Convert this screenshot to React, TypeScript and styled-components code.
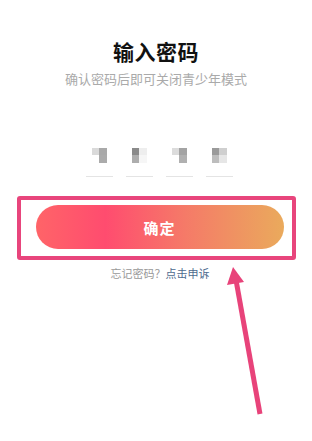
import React from "react";
import styled, { createGlobalStyle } from "styled-components";

const Global = createGlobalStyle`
  html, body { margin: 0; padding: 0; background: #ffffff; }
  body { font-family: "Noto Sans CJK SC", "Noto Sans", sans-serif; }
`;

const Page = styled.div`
  position: relative;
  width: 312px;
  height: 441px;
  display: flex;
  flex-direction: column;
  align-items: center;
  overflow: hidden;
`;

const Title = styled.h1`
  margin: 38px 0 0;
  font-size: 21px;
  line-height: 26px;
  font-weight: 700;
  color: #111;
  letter-spacing: 0.5px;
`;

const Subtitle = styled.p`
  margin: 7px 0 0;
  font-size: 13px;
  line-height: 16px;
  color: #aaaaaa;
`;

const PinRow = styled.div`
  display: flex;
  gap: 13px;
  margin-top: 61px;
  padding-left: 7px;
`;

const PinCell = styled.div`
  width: 27px;
  height: 28px;
  display: flex;
  justify-content: center;
  align-items: flex-start;
  border-bottom: 1px solid #e4e4e4;
`;

const Blob = styled.div`
  display: grid;
  grid-template-columns: 7px 8px;
  grid-template-rows: 7px 8px;
  filter: blur(0.4px);
`;

const Px = styled.div<{ $c: string }>`
  background: ${(p) => p.$c};
`;

const Highlight = styled.div`
  margin-top: 19px;
  width: 279px;
  box-sizing: border-box;
  border: 4px solid #e8457c;
  border-radius: 3px;
  padding: 5px 8px 7px 15px;
`;

const ConfirmButton = styled.button`
  display: block;
  width: 100%;
  height: 44px;
  border: none;
  border-radius: 22px;
  background: linear-gradient(90deg, #ff6468 0%, #ff4c6f 28%, #f57a68 60%, #eaaa5c 100%);
  color: #fff;
  font-family: inherit;
  font-size: 15px;
  font-weight: 700;
  letter-spacing: 1px;
`;

const Forgot = styled.p`
  margin: 5px 0 0;
  padding-left: 8px;
  font-size: 11px;
  line-height: 16px;
  color: #999;
`;

const Link = styled.span`
  color: #4d6b8e;
`;

const ArrowLayer = styled.svg`
  position: absolute;
  left: 0;
  top: 0;
  pointer-events: none;
`;

const blobs: string[][] = [
  ["#dadada", "#a9a9a9", "#ffffff", "#ababab"],
  ["#8a8a8a", "#eeeeee", "#adadad", "#f6f6f6"],
  ["#dcdcdc", "#a3a3a3", "#ffffff", "#b0b0b0"],
  ["#9a9a9a", "#cfcfcf", "#bdbdbd", "#e6e6e6"],
];

export default function App() {
  return (
    <>
      <Global />
      <Page>
        <Title>输入密码</Title>
        <Subtitle>确认密码后即可关闭青少年模式</Subtitle>
        <PinRow>
          {blobs.map((b, i) => (
            <PinCell key={i}>
              <Blob>
                {b.map((c, j) => (
                  <Px key={j} $c={c} />
                ))}
              </Blob>
            </PinCell>
          ))}
        </PinRow>
        <Highlight>
          <ConfirmButton>确定</ConfirmButton>
        </Highlight>
        <Forgot>
          忘记密码？<Link>点击申诉</Link>
        </Forgot>
        <ArrowLayer width="312" height="441" viewBox="0 0 312 441">
          <line x1="260" y1="414" x2="236" y2="280" stroke="#e8437a" strokeWidth="5" strokeLinecap="butt" />
          <polygon points="233,267 244,282 227,285" fill="#e8437a" />
        </ArrowLayer>
      </Page>
    </>
  );
}
